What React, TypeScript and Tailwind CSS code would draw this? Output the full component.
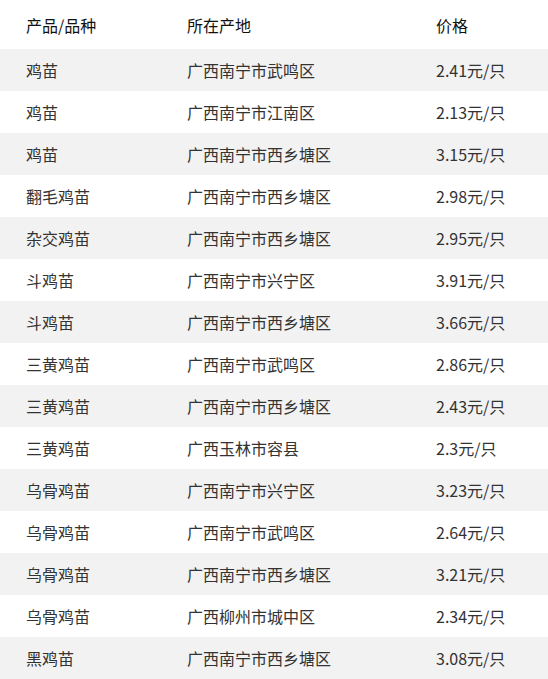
const rows = [
  ['鸡苗', '广西南宁市武鸣区', '2.41元/只'],
  ['鸡苗', '广西南宁市江南区', '2.13元/只'],
  ['鸡苗', '广西南宁市西乡塘区', '3.15元/只'],
  ['翻毛鸡苗', '广西南宁市西乡塘区', '2.98元/只'],
  ['杂交鸡苗', '广西南宁市西乡塘区', '2.95元/只'],
  ['斗鸡苗', '广西南宁市兴宁区', '3.91元/只'],
  ['斗鸡苗', '广西南宁市西乡塘区', '3.66元/只'],
  ['三黄鸡苗', '广西南宁市武鸣区', '2.86元/只'],
  ['三黄鸡苗', '广西南宁市西乡塘区', '2.43元/只'],
  ['三黄鸡苗', '广西玉林市容县', '2.3元/只'],
  ['乌骨鸡苗', '广西南宁市兴宁区', '3.23元/只'],
  ['乌骨鸡苗', '广西南宁市武鸣区', '2.64元/只'],
  ['乌骨鸡苗', '广西南宁市西乡塘区', '3.21元/只'],
  ['乌骨鸡苗', '广西柳州市城中区', '2.34元/只'],
  ['黑鸡苗', '广西南宁市西乡塘区', '3.08元/只'],
];

export default function App() {
  return (
    <div className="w-[548px] bg-white text-[16px] font-['Noto_Sans_CJK_SC','Noto_Sans',sans-serif]">
      <div className="flex h-[49px] items-center pl-[26px] text-[#111]">
        <div className="w-[161px]">产品/品种</div>
        <div className="w-[249px]">所在产地</div>
        <div>价格</div>
      </div>
      {rows.map((r, i) => (
        <div
          key={i}
          className={`flex h-[42px] items-center pl-[26px] text-[#333] ${i % 2 === 0 ? 'bg-[#f2f2f2]' : 'bg-white'}`}
        >
          <div className="w-[161px]">{r[0]}</div>
          <div className="w-[249px]">{r[1]}</div>
          <div>{r[2]}</div>
        </div>
      ))}
    </div>
  );
}
